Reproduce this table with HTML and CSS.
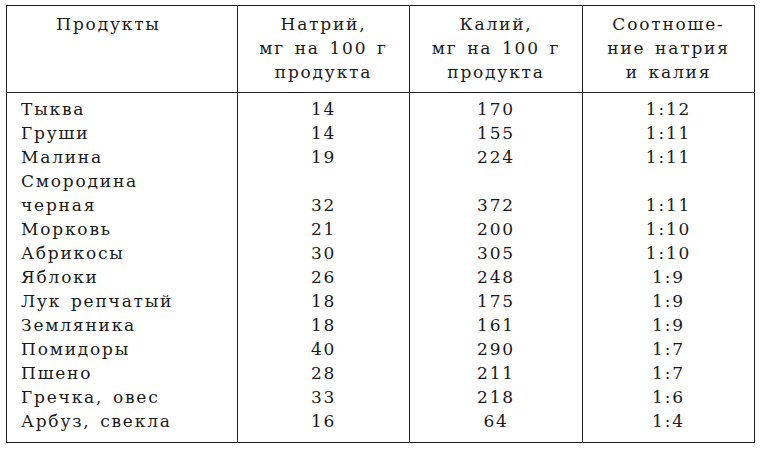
FILE: index.html
```html
<!DOCTYPE html>
<html lang="ru">
<head>
<meta charset="utf-8">
<title>Натрий и калий в продуктах</title>
<link rel="stylesheet" href="styles.css">
</head>
<body>
<table class="nk-table">
  <colgroup>
    <col class="c1"><col class="c2"><col class="c3"><col class="c4">
  </colgroup>
  <thead>
    <tr>
      <th class="name-h">Продукты</th>
      <th>Натрий,<br>мг на 100 г<br>продукта</th>
      <th>Калий,<br>мг на 100 г<br>продукта</th>
      <th>Соотноше-<br>ние натрия<br>и калия</th>
    </tr>
  </thead>
  <tbody>
    <tr class="first"><td class="name">Тыква</td><td>14</td><td>170</td><td>1:12</td></tr>
    <tr><td class="name">Груши</td><td>14</td><td>155</td><td>1:11</td></tr>
    <tr><td class="name">Малина</td><td>19</td><td>224</td><td>1:11</td></tr>
    <tr><td class="name">Смородина<br>черная</td><td>32</td><td>372</td><td>1:11</td></tr>
    <tr><td class="name">Морковь</td><td>21</td><td>200</td><td>1:10</td></tr>
    <tr><td class="name">Абрикосы</td><td>30</td><td>305</td><td>1:10</td></tr>
    <tr><td class="name">Яблоки</td><td>26</td><td>248</td><td>1:9</td></tr>
    <tr><td class="name">Лук репчатый</td><td>18</td><td>175</td><td>1:9</td></tr>
    <tr><td class="name">Земляника</td><td>18</td><td>161</td><td>1:9</td></tr>
    <tr><td class="name">Помидоры</td><td>40</td><td>290</td><td>1:7</td></tr>
    <tr><td class="name">Пшено</td><td>28</td><td>211</td><td>1:7</td></tr>
    <tr><td class="name">Гречка, овес</td><td>33</td><td>218</td><td>1:6</td></tr>
    <tr class="last"><td class="name">Арбуз, свекла</td><td>16</td><td>64</td><td>1:4</td></tr>
  </tbody>
</table>
</body>
</html>
```

FILE: styles.css
```css
html, body {
  margin: 0;
  padding: 0;
  background: #ffffff;
}

body {
  padding: 5px 0 0 6px;
  font-family: "DejaVu Serif", "Liberation Serif", serif;
  font-size: 17px;
  letter-spacing: 1.8px;
  word-spacing: 2.5px;
  color: #1a1a1a;
}

.nk-table {
  border-collapse: collapse;
  table-layout: fixed;
  width: 748px;
}

.c1 { width: 231px; }
.c2 { width: 172px; }
.c3 { width: 173px; }
.c4 { width: 172px; }

.nk-table th,
.nk-table td {
  border-left: 1.5px solid #1e1e1e;
  border-right: 1.5px solid #1e1e1e;
  padding: 0;
  line-height: 24px;
  text-align: center;
  font-weight: normal;
  white-space: nowrap;
}

.nk-table thead th {
  border-top: 1.5px solid #1e1e1e;
  border-bottom: 1.5px solid #1e1e1e;
  padding: 6px 0 8px;
  vertical-align: top;
}

.nk-table thead th.name-h {
  padding-right: 27px;
}

.nk-table tbody td {
  vertical-align: bottom;
}

.nk-table td.name {
  text-align: left;
  padding-left: 14px;
}

.nk-table tr.first td {
  padding-top: 4px;
}

.nk-table tr.last td {
  padding-bottom: 9px;
  border-bottom: 1.5px solid #1e1e1e;
}
```
